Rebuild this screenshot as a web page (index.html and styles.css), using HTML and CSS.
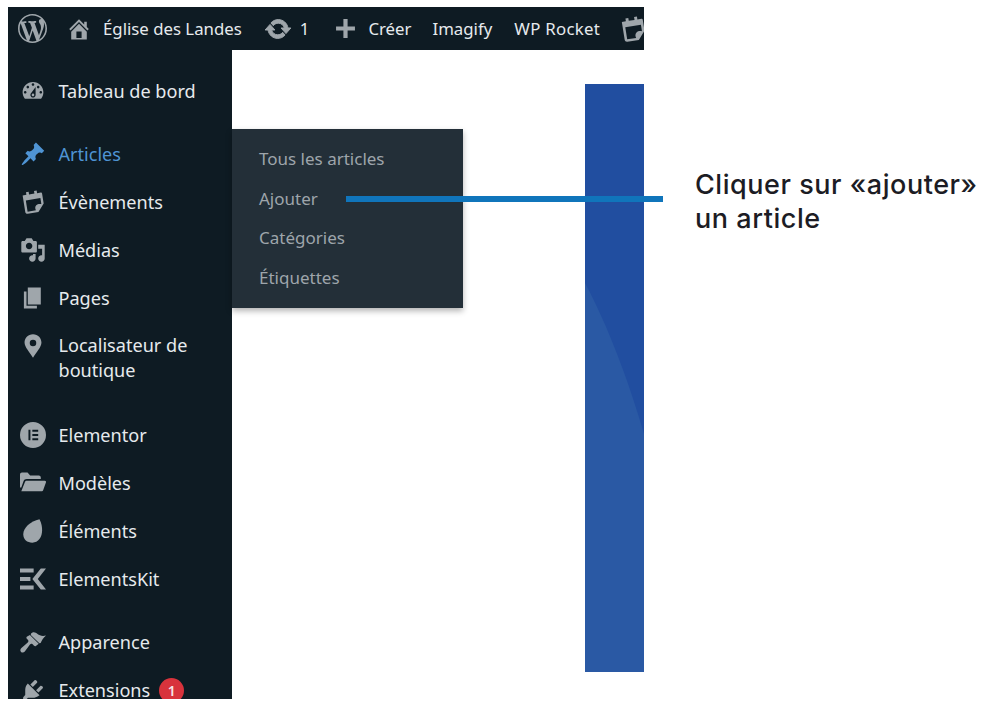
FILE: index.html
```html
<!DOCTYPE html>
<html lang="fr">
<head>
<meta charset="utf-8">
<title>Église des Landes</title>
<link rel="stylesheet" href="styles.css">
</head>
<body>
<div class="page">
  <div class="frame">
    <header class="topbar">
      <svg class="tb-logo" viewBox="0 0 20 20"><path d="M20 10c0-5.51-4.49-10-10-10C4.48 0 0 4.49 0 10c0 5.52 4.48 10 10 10 5.51 0 10-4.48 10-10zM7.78 15.37L4.37 6.22c.55-.02 1.17-.08 1.17-.08.5-.06.44-1.13-.06-1.11 0 0-1.45.11-2.37.11-.18 0-.37 0-.58-.01C4.12 2.69 6.87 1.11 10 1.11c2.33 0 4.45.87 6.05 2.34-.68-.11-1.65.39-1.65 1.58 0 .74.45 1.36.9 2.1.35.61.55 1.36.55 2.46 0 1.49-1.4 5-1.4 5l-3.03-8.37c.54-.02.82-.17.82-.17.5-.05.44-1.25-.06-1.22 0 0-1.44.12-2.38.12-.87 0-2.33-.12-2.33-.12-.5-.03-.56 1.2-.06 1.22l.92.08 1.26 3.41zM17.41 10c.24-.64.74-1.87.43-4.25.7 1.29 1.05 2.71 1.05 4.25 0 3.29-1.73 6.24-4.4 7.78.97-2.59 1.94-5.2 2.92-7.78zM6.1 18.09C3.12 16.65 1.11 13.53 1.11 10c0-1.3.23-2.48.72-3.59C3.25 10.3 4.67 14.2 6.1 18.09zm4.03-6.63l2.58 6.98c-.86.29-1.76.45-2.71.45-.79 0-1.57-.11-2.29-.33.81-2.38 1.62-4.74 2.42-7.1z"/></svg>
      <svg class="tb-icon tb-home" viewBox="0 0 20 20"><path d="M16 8.5l1.53 1.53-1.06 1.06L10 4.62l-6.47 6.47-1.06-1.06L10 2.5l4 4v-2h2v4zm-6-2.46l6 5.99V18H4v-5.97zM12 17v-5H8v5h4z"/></svg>
      <span class="tb-text tb-site">Église des Landes</span>
      <svg class="tb-icon tb-update" viewBox="0 0 20 20"><path d="M10.2 3.28c3.53 0 6.43 2.61 6.92 6h2.08l-3.5 4-3.5-4h2.32c-.45-1.97-2.21-3.44-4.32-3.44-1.45 0-2.73.71-3.54 1.78L4.95 5.66C6.23 4.2 8.11 3.28 10.2 3.28zm-.4 13.44c-3.52 0-6.43-2.61-6.92-6H.8l3.5-4c1.17 1.33 2.33 2.67 3.5 4H5.48c.45 1.97 2.21 3.44 4.32 3.44 1.45 0 2.73-.71 3.54-1.78l1.71 1.95c-1.28 1.46-3.15 2.39-5.25 2.39z"/></svg>
      <span class="tb-text tb-count">1</span>
      <svg class="tb-icon tb-plus" viewBox="0 0 20 20"><path d="M8 1h4v7h7v4h-7v7H8v-7H1V8h7z"/></svg>
      <span class="tb-text tb-new">Créer</span>
      <span class="tb-text tb-imagify">Imagify</span>
      <span class="tb-text tb-rocket">WP Rocket</span>
      <svg class="tb-icon tb-cal" viewBox="0 0 24 24"><use href="#cal"/></svg>
    </header>
    <div class="body">
      <nav class="sidebar">
        <div class="menu-group">
          <a class="row"><span class="ico"><svg viewBox="0 0 20 20"><path d="M3.76 16h12.48c1.1-1.37 1.76-3.11 1.76-5 0-4.42-3.58-8-8-8s-8 3.58-8 8c0 1.89.66 3.63 1.76 5zM10 4c.55 0 1 .45 1 1s-.45 1-1 1-1-.45-1-1 .45-1 1-1zM6 6c.55 0 1 .45 1 1s-.45 1-1 1-1-.45-1-1 .45-1 1-1zm8 0c.55 0 1 .45 1 1s-.45 1-1 1-1-.45-1-1 .45-1 1-1zm-5.37 5.55L12 7v6c0 1.1-.9 2-2 2s-2-.9-2-2c0-.57.24-1.08.63-1.45zM4 10c.55 0 1 .45 1 1s-.45 1-1 1-1-.45-1-1 .45-1 1-1zm12 0c.55 0 1 .45 1 1s-.45 1-1 1-1-.45-1-1 .45-1 1-1zm-5 3c0-.55-.45-1-1-1s-1 .45-1 1 .45 1 1 1 1-.45 1-1z"/></svg></span>Tableau de bord</a>
        </div>
        <div class="menu-group">
          <a class="row row-current"><span class="ico"><svg viewBox="0 0 20 20"><path d="M10.44 3.02l1.82-1.82 6.36 6.35-1.83 1.82c-1.05-.68-2.48-.57-3.41.36l-.75.75c-.92.93-1.04 2.35-.35 3.41l-1.83 1.82-2.41-2.41-2.8 2.79c-.42.42-3.38 2.71-3.8 2.29s1.86-3.39 2.28-3.81l2.79-2.79L4.1 9.36l1.83-1.82c1.05.69 2.48.57 3.4-.36l.75-.75c.93-.92 1.05-2.35.36-3.41z"/></svg></span>Articles</a>
          <a class="row"><span class="ico"><svg viewBox="0 0 24 24"><use href="#cal"/></svg></span>Évènements</a>
          <a class="row"><span class="ico"><svg viewBox="0 0 20 20"><path d="M13 11V4c0-.55-.45-1-1-1h-1.67L9 1H5L3.67 3H2c-.55 0-1 .45-1 1v7c0 .55.45 1 1 1h10c.55 0 1-.45 1-1zM7 4.5c1.38 0 2.5 1.12 2.5 2.5S8.38 9.5 7 9.5 4.5 8.38 4.5 7 5.62 4.5 7 4.5zM14 6h5v10.5c0 1.38-1.12 2.5-2.5 2.5S14 17.88 14 16.5s1.12-2.5 2.5-2.5c.17 0 .34.02.5.05V9h-3V6zm-4 8.05V13h2v3.5c0 1.38-1.12 2.5-2.5 2.5S7 17.88 7 16.5 8.12 14 9.5 14c.17 0 .34.02.5.05z"/></svg></span>Médias</a>
          <a class="row"><span class="ico"><svg viewBox="0 0 20 20"><path d="M6 15V2h10v13H6zm-1 1h8v2H3V5h2v11z"/></svg></span>Pages</a>
          <a class="row row-tall"><span class="ico"><svg viewBox="0 0 20 20"><path fill-rule="evenodd" d="M10 1C6.1 1 3.5 4 3.5 7.4c0 3.6 4 7.6 6.5 11.6 2.5-4 6.5-8 6.5-11.6C16.500 4 13.900 1 10 1zm0 4.200a2.500 2.500 0 1 1 0 5 2.500 2.500 0 0 1 0-5z"/></svg></span><span>Localisateur de<br>boutique</span></a>
        </div>
        <div class="menu-group">
          <a class="row"><span class="ico"><svg viewBox="0 0 20 20"><path fill-rule="evenodd" d="M10 0a10 10 0 1 1 0 20 10 10 0 0 1 0-20zM6.500 6v8H8V6zm3 0v1.500H14V6zm0 3.250v1.500H14v-1.500zm0 3.250V14H14v-1.500z"/></svg></span>Elementor</a>
          <a class="row"><span class="ico"><svg viewBox="0 0 20 20"><path d="M0 3.500C0 2.700.7 2 1.500 2h4.300l2 2.200h6.700c.8 0 1.500.7 1.500 1.500V7H5.200C4 7 3.100 7.700 2.700 8.700L1 13.500H0zM5.200 8.200H19c.7 0 1.200.7 1 1.300l-2.200 6c-.2.500-.7.800-1.200.8H1l2.800-7.100c.2-.6.8-1 1.400-1z"/></svg></span>Modèles</a>
          <a class="row"><span class="ico"><svg viewBox="0 0 20 20"><path d="M15 1C16.500 4 17 6.500 17 9.500c0 5.500-3 9.500-7.500 9.500C5.500 19 2.500 16.500 2.500 12.500 2.500 7.500 8 2.500 15 1z"/></svg></span>Éléments</a>
          <a class="row"><span class="ico"><svg viewBox="0 0 20 20"><path d="M0 2h10.500v3H0zM0 8.500h8v3H0zM0 15h10.500v3H0zM16 2h4l-6.300 8 6.300 8h-4l-6.500-8z"/></svg></span>ElementsKit</a>
        </div>
        <div class="menu-group">
          <a class="row"><span class="ico"><svg viewBox="0 0 20 20"><path d="M8.500 3.500c2-1.800 3.500-.7 5 .4 1.600 1.200 3.800 1.900 6.500 1.100-2 1.700-3.200 3.800-4.100 5.800l-1 .2-6.600-6.400zM7.600 4.600l6.800 6.800-2.200 1.700c-.8.400-1.500-.1-1.900-.7l-.8-.8c-1-.6-1.700.1-2.400 1l-3.400 4.700c-.7.900-2 1.200-2.900.3-.9-.9-.6-2.200.3-2.900L5.300 11c.8-.7 1.600-1.400 1-2.400l-.8-.9c-.6-.5-.8-1.100-.3-1.700z"/></svg></span>Apparence</a>
          <a class="row"><span class="ico"><svg viewBox="0 0 20 20"><path d="M13.110 4.360L9.870 7.600 8 5.730l3.240-3.240c.35-.34 1.050-.2 1.560.32.52.51.66 1.210.31 1.550zm-8 1.770l.91-1.120 9.010 9.010-1.190.84c-.71.71-2.630 1.160-3.820 1.160H6.140L4.900 17.260c-.59.59-1.540.59-2.120 0-.59-.58-.59-1.530 0-2.120l1.240-1.240v-3.880c0-1.130.4-3.190 1.090-3.890zm7.260 3.970l3.240-3.240c.34-.35 1.040-.21 1.550.31.52.51.66 1.210.31 1.550l-3.240 3.250z"/></svg></span>Extensions<span class="badge">1</span></a>
        </div>
      </nav>
      <main class="content">
        <div class="banner">
          <svg class="banner-shape" viewBox="0 0 59 588" preserveAspectRatio="none"><path d="M0 199C22 240 43 295 59 350V588H0z"/></svg>
        </div>
      </main>
      <div class="flyout">
        <a class="fly-item">Tous les articles</a>
        <a class="fly-item">Ajouter</a>
        <a class="fly-item">Catégories</a>
        <a class="fly-item">Étiquettes</a>
      </div>
    </div>
  </div>
  <p class="note">Cliquer sur «ajouter»<br>un article</p>
  <div class="pointer"></div>
</div>
<svg class="defs" aria-hidden="true"><defs>
  <g id="cal" transform="rotate(-9 12 12)">
    <path fill-rule="evenodd" d="M3.500 4.500H7V2h2.500v2.500h5V2H17v2.500h3.500c.7 0 1 .4 1 1V15l-6 7H5.500c-1.200 0-2-.8-2-2zM5.700 9.500V20h7.800c-.7-1.700-.3-3.700 1-4.600 1.400-1 3-.9 4.800-.3V9.500z"/>
  </g>
</defs></svg>
</body>
</html>
```
FILE: styles.css
```css
* { box-sizing: border-box; }
html, body { margin: 0; height: 100%; background: #fff; overflow: hidden; }
body { font-family: "Noto Sans", "Open Sans", sans-serif; }
.page { position: relative; display: flex; align-items: flex-start; padding: 7px 0 0 8px; height: 708px; }
.frame { width: 636px; height: 692px; display: flex; flex-direction: column; overflow: hidden; flex: none; }

.topbar { height: 43px; flex: none; background: #0e1b23; display: flex; align-items: center; white-space: nowrap; color: #e6eaed; fill: #9fa6ab; }
.tb-logo { width: 29px; height: 29px; margin-left: 10px; flex: none; }
.tb-icon { flex: none; }
.tb-home { width: 26px; height: 26px; margin-left: 19px; }
.tb-text { font-size: 16.800px; line-height: 43px; }
.tb-site { margin-left: 11px; }
.tb-update { width: 28px; height: 28px; margin-left: 22px; stroke: #9fa6ab; stroke-width: .7; }
.tb-count { margin-left: 8px; }
.tb-plus { width: 21px; height: 21px; margin-left: 26px; }
.tb-new { margin-left: 12px; }
.tb-imagify { margin-left: 21px; }
.tb-rocket { margin-left: 22px; letter-spacing: .3px; }
.tb-cal { width: 28px; height: 28px; margin-left: 19px; }

.body { position: relative; flex: 1; display: flex; min-height: 0; }
.sidebar { width: 224px; flex: none; background: #0e1b23; padding-top: 17px; display: flex; flex-direction: column; gap: 15px; }
.menu-group { display: flex; flex-direction: column; }
.row { display: flex; align-items: center; height: 48px; padding-left: 12px; font-size: 18.100px; line-height: 18px; color: #e6eaed; fill: #9fa6ab; white-space: nowrap; }
.row-current { color: #4f94d4; fill: #4f94d4; }
.row-tall { height: 74px; align-items: flex-start; padding-top: 11px; line-height: 25px; }
.ico { width: 26px; height: 26px; margin-right: 12.500px; flex: none; display: flex; align-items: center; justify-content: center; }
.ico svg { width: 26px; height: 26px; display: block; }
.badge { width: 25px; height: 25px; margin-left: 9px; border-radius: 50%; background: #d8333c; color: #f5e6e7; font-size: 14px; font-weight: 600; line-height: 25px; text-align: center; }

.content { flex: 1; background: #fff; padding: 34px 0 0 353px; }
.banner { position: relative; width: 59px; height: 588px; background: #214ea0; }
.banner-shape { position: absolute; inset: 0; width: 100%; height: 100%; fill: #2a59a4; display: block; }

.flyout { position: absolute; left: 224px; top: 79px; width: 231px; height: 179px; padding-top: 10px; background: #232f38; box-shadow: 0 3px 6px rgba(0,0,0,.3); }
.fly-item { display: block; height: 39.700px; line-height: 39.700px; padding-left: 27px; font-size: 17px; color: #9ea5ab; }

.note { margin: 161px 0 0 51px; font-family: "Inter", sans-serif; font-size: 27px; font-weight: 500; letter-spacing: .55px; line-height: 34px; color: #1c1c24; white-space: nowrap; }
.pointer { position: absolute; left: 346px; top: 196px; width: 317px; height: 6px; background: #1075bb; }
.defs { position: absolute; width: 0; height: 0; }
```
